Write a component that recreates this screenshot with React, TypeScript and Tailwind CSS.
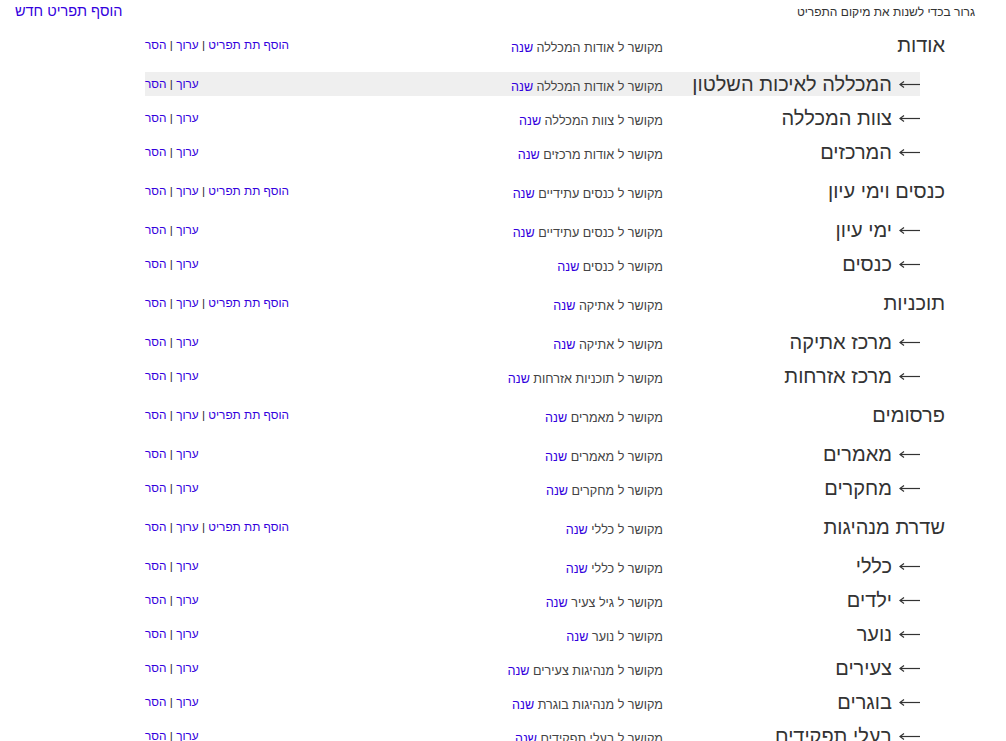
import React from "react";

type Item = {
  name: string;
  link: string;
  sub?: boolean;
  hover?: boolean;
};

const items: Item[] = [
  { name: "אודות", link: "אודות המכללה" },
  { name: "המכללה לאיכות השלטון", link: "אודות המכללה", sub: true, hover: true },
  { name: "צוות המכללה", link: "צוות המכללה", sub: true },
  { name: "המרכזים", link: "אודות מרכזים", sub: true },
  { name: "כנסים וימי עיון", link: "כנסים עתידיים" },
  { name: "ימי עיון", link: "כנסים עתידיים", sub: true },
  { name: "כנסים", link: "כנסים", sub: true },
  { name: "תוכניות", link: "אתיקה" },
  { name: "מרכז אתיקה", link: "אתיקה", sub: true },
  { name: "מרכז אזרחות", link: "תוכניות אזרחות", sub: true },
  { name: "פרסומים", link: "מאמרים" },
  { name: "מאמרים", link: "מאמרים", sub: true },
  { name: "מחקרים", link: "מחקרים", sub: true },
  { name: "שדרת מנהיגות", link: "כללי" },
  { name: "כללי", link: "כללי", sub: true },
  { name: "ילדים", link: "גיל צעיר", sub: true },
  { name: "נוער", link: "נוער", sub: true },
  { name: "צעירים", link: "מנהיגות צעירים", sub: true },
  { name: "בוגרים", link: "מנהיגות בוגרת", sub: true },
  { name: "בעלי תפקידים", link: "בעלי תפקידים", sub: true },
];

// thin long left arrow, like &larr; in the original font
function Arrow() {
  return (
    <svg width="21" height="10" viewBox="0 0 21 10" className="ml-[7px] shrink-0">
      <path d="M1 5.5H21" stroke="#333" strokeWidth="1.2" fill="none" />
      <path d="M5 2.5L1 5.5L5 8.5" stroke="#333" strokeWidth="1.2" fill="none" />
    </svg>
  );
}

function MenuRow({ item }: { item: Item }) {
  return (
    <div className={`py-[5px] ${item.sub ? "mr-[25px]" : ""}`}>
      <div
        className={`flex items-center ${item.sub ? "h-[24px]" : "h-[34px]"} ${
          item.hover ? "bg-[#efefef]" : ""
        }`}
      >
        <div
          className={`shrink-0 flex items-center text-[20px] leading-[24px] text-[#333] whitespace-nowrap ${
            item.sub ? "w-[257px]" : "w-[282px]"
          }`}
        >
          {item.sub && <Arrow />}
          <span>{item.name}</span>
        </div>
        <div className="flex-1 pt-[6px] text-[12.6px] leading-[16px] text-[#444] whitespace-nowrap">
          מקושר ל {item.link} <a className="text-[#3300dd] cursor-pointer">שנה</a>
        </div>
        <div className="text-[11.8px] leading-[16px] text-[#333] whitespace-nowrap text-left">
          {!item.sub && (
            <>
              <a className="text-[#3300dd] cursor-pointer">הוסף תת תפריט</a>
              {" | "}
            </>
          )}
          <a className="text-[#3300dd] cursor-pointer">ערוך</a>
          {" | "}
          <a className="text-[#3300dd] cursor-pointer">הסר</a>
        </div>
      </div>
    </div>
  );
}

export default function App() {
  return (
    <div
      dir="rtl"
      className="w-[1006px] h-[741px] overflow-hidden bg-white"
      style={{ fontFamily: '"Liberation Sans", "DejaVu Sans", sans-serif' }}
    >
      <div className="flex items-center justify-between h-[23px] pr-[31px] pl-[15px]">
        <div className="text-[12px] text-[#333]">גרור בכדי לשנות את מיקום התפריט</div>
        <a className="text-[14.5px] text-[#3300dd] cursor-pointer">הוסף תפריט חדש</a>
      </div>
      <div className="mr-[61px] ml-[145px]">
        {items.map((item, i) => (
          <MenuRow key={i} item={item} />
        ))}
      </div>
    </div>
  );
}
